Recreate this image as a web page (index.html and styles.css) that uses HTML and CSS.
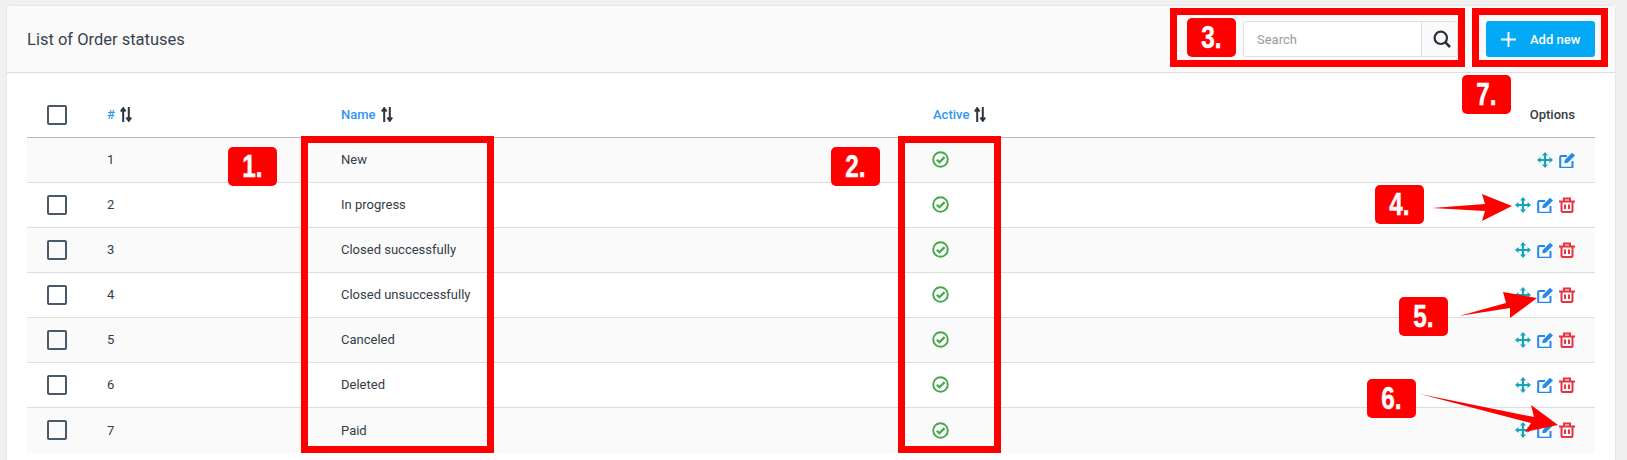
FILE: index.html
```html
<!DOCTYPE html>
<html lang="en">
<head>
<meta charset="utf-8">
<title>List of Order statuses</title>
<link rel="stylesheet" href="styles.css">
</head>
<body>
<svg width="0" height="0" class="defs">
  <defs>
    <symbol id="i-move" viewBox="0 0 16 16"><path d="M8 0 11 3.500H9.100V6.900H12.500V5L16 8 12.500 11V9.100H9.100V12.500H11L8 16 5 12.500H6.900V9.100H3.500V11L0 8 3.500 5V6.900H6.900V3.500H5Z" fill="#12a5bd"/></symbol>
    <symbol id="i-edit" viewBox="0 0 16 16"><path d="M8 4H2.200a1 1 0 0 0-1 1v9.800a1 1 0 0 0 1 1h10.300a1 1 0 0 0 1-1V9" fill="none" stroke="#2489ea" stroke-width="2"/><path d="M5.300 11.200 5.800 8 13 .8 16 3.500 8.700 10.700Z" fill="#2489ea"/></symbol>
    <symbol id="i-trash" viewBox="0 0 16 16"><path d="M0 4.500H16M5 4.500V1.500H11V4.500M2.500 4.500V14a1 1 0 0 0 1 1H12.500a1 1 0 0 0 1-1V4.500M6 7.500v4.500M10 7.500v4.500" fill="none" stroke="#e5333f" stroke-width="2"/></symbol>
    <symbol id="i-check" viewBox="0 0 17 17"><circle cx="8.500" cy="8.500" r="7.300" fill="none" stroke="#43a84b" stroke-width="1.900"/><path d="m4.800 8.700 2.600 2.600 5.200-5.200" fill="none" stroke="#43a84b" stroke-width="2.200"/></symbol>
    <symbol id="i-sort" viewBox="0 0 12 15"><path d="M3.200 15V2M.8 4.500 3.200 1.200 5.600 4.500M8.800 0V13M6.400 10.500 8.800 13.800 11.200 10.500" fill="none" stroke="#2c3540" stroke-width="2"/></symbol>
  </defs>
</svg>

<main class="card">
  <header class="card-head">
    <h1 class="card-title">List of Order statuses</h1>
    <div class="tools">
      <div class="search">
        <input class="search-input" type="text" placeholder="Search">
        <button class="search-btn" type="button" aria-label="Search">
          <svg class="search-icon" viewBox="0 0 18 18"><circle cx="7.800" cy="7.800" r="6.200" fill="none" stroke="#27303a" stroke-width="2.200"/><path d="m12.200 12.200 4.800 4.800" stroke="#27303a" stroke-width="2.600" fill="none"/></svg>
        </button>
      </div>
      <button class="add-btn" type="button">
        <svg class="add-icon" viewBox="0 0 16 16"><path d="M8 0v16M0 8h16" stroke="#fff" stroke-width="2" fill="none"/></svg>
        <span>Add new</span>
      </button>
    </div>
  </header>

  <section class="table-wrap">
    <div class="row row-head">
      <div class="c-check"><span class="box"></span></div>
      <div class="c-id sort">#<svg class="sort-icon"><use href="#i-sort"/></svg></div>
      <div class="c-name sort">Name<svg class="sort-icon"><use href="#i-sort"/></svg></div>
      <div class="c-active sort">Active<svg class="sort-icon"><use href="#i-sort"/></svg></div>
      <div class="c-opts opts-title">Options</div>
    </div>

    <div class="row odd">
      <div class="c-check"></div>
      <div class="c-id">1</div>
      <div class="c-name">New</div>
      <div class="c-active"><svg class="check"><use href="#i-check"/></svg></div>
      <div class="c-opts"><svg class="act"><use href="#i-move"/></svg><svg class="act"><use href="#i-edit"/></svg></div>
    </div>
    <div class="row">
      <div class="c-check"><span class="box"></span></div>
      <div class="c-id">2</div>
      <div class="c-name">In progress</div>
      <div class="c-active"><svg class="check"><use href="#i-check"/></svg></div>
      <div class="c-opts"><svg class="act"><use href="#i-move"/></svg><svg class="act"><use href="#i-edit"/></svg><svg class="act"><use href="#i-trash"/></svg></div>
    </div>
    <div class="row odd">
      <div class="c-check"><span class="box"></span></div>
      <div class="c-id">3</div>
      <div class="c-name">Closed successfully</div>
      <div class="c-active"><svg class="check"><use href="#i-check"/></svg></div>
      <div class="c-opts"><svg class="act"><use href="#i-move"/></svg><svg class="act"><use href="#i-edit"/></svg><svg class="act"><use href="#i-trash"/></svg></div>
    </div>
    <div class="row">
      <div class="c-check"><span class="box"></span></div>
      <div class="c-id">4</div>
      <div class="c-name">Closed unsuccessfully</div>
      <div class="c-active"><svg class="check"><use href="#i-check"/></svg></div>
      <div class="c-opts"><svg class="act"><use href="#i-move"/></svg><svg class="act"><use href="#i-edit"/></svg><svg class="act"><use href="#i-trash"/></svg></div>
    </div>
    <div class="row odd">
      <div class="c-check"><span class="box"></span></div>
      <div class="c-id">5</div>
      <div class="c-name">Canceled</div>
      <div class="c-active"><svg class="check"><use href="#i-check"/></svg></div>
      <div class="c-opts"><svg class="act"><use href="#i-move"/></svg><svg class="act"><use href="#i-edit"/></svg><svg class="act"><use href="#i-trash"/></svg></div>
    </div>
    <div class="row">
      <div class="c-check"><span class="box"></span></div>
      <div class="c-id">6</div>
      <div class="c-name">Deleted</div>
      <div class="c-active"><svg class="check"><use href="#i-check"/></svg></div>
      <div class="c-opts"><svg class="act"><use href="#i-move"/></svg><svg class="act"><use href="#i-edit"/></svg><svg class="act"><use href="#i-trash"/></svg></div>
    </div>
    <div class="row odd last">
      <div class="c-check"><span class="box"></span></div>
      <div class="c-id">7</div>
      <div class="c-name">Paid</div>
      <div class="c-active"><svg class="check"><use href="#i-check"/></svg></div>
      <div class="c-opts"><svg class="act"><use href="#i-move"/></svg><svg class="act"><use href="#i-edit"/></svg><svg class="act"><use href="#i-trash"/></svg></div>
    </div>
  </section>
</main>

<div class="mark mark-search"></div>
<div class="mark mark-add"></div>
<div class="mark mark-name"></div>
<div class="mark mark-active"></div>

<span class="badge b1"><span class="badge-num">1.</span></span>
<span class="badge b2"><span class="badge-num">2.</span></span>
<span class="badge b3"><span class="badge-num">3.</span></span>
<span class="badge b4"><span class="badge-num">4.</span></span>
<span class="badge b5"><span class="badge-num">5.</span></span>
<span class="badge b6"><span class="badge-num">6.</span></span>
<span class="badge b7"><span class="badge-num">7.</span></span>

<svg class="arrows" viewBox="0 0 1627 460">
  <path d="M1432 208 1485 204 1482 194 1512 206 1482 221 1485 211Z" fill="#f00"/>
  <path d="M1459 316 1506 303 1503 292 1537 298 1510 318 1510 308Z" fill="#f00"/>
  <path d="M1420 394 1534 417 1531 405 1558 425 1525 432 1531 423Z" fill="#f00"/>
</svg>
</body>
</html>
```
FILE: styles.css
```css
* { box-sizing: border-box; }
html, body { height: 100%; }
body {
  margin: 0;
  padding: 6px 12px 0 7px;
  background: #f0f0f0;
  font-family: Roboto, "Liberation Sans", sans-serif;
  color: #333d47;
  overflow: hidden;
  position: relative;
}
.defs { position: absolute; }
.card {
  background: #fff;
  border-radius: 3px 3px 0 0;
  min-height: 470px;
  box-shadow: 0 0 2px rgba(0,0,0,.15);
}
.card-head {
  height: 67px;
  background: #fafafa;
  border-bottom: 1px solid #dedede;
  display: flex;
  align-items: center;
  justify-content: space-between;
  padding: 0 20px;
}
.card-title {
  margin: 0;
  font-size: 16.5px;
  font-weight: 400;
  color: #38424c;
}
.tools { display: flex; align-items: center; gap: 28px; }
.search {
  display: flex;
  width: 215px;
  height: 36px;
  background: #fff;
  border: 1px solid #e0e0e0;
  border-radius: 3px;
  overflow: hidden;
}
.search-input {
  width: 177px;
  border: 0;
  background: transparent;
  padding: 0 13px;
  font: 400 13px Roboto, sans-serif;
  outline: 0;
}
.search-input::placeholder { color: #9a9a9a; opacity: 1; }
.search-btn {
  flex: 1;
  border: 0;
  border-left: 1px solid #e0e0e0;
  background: #fafafa;
  padding: 0 0 0 5px;
  display: flex;
  align-items: center;
  justify-content: center;
}
.search-icon { width: 18px; height: 18px; }
.add-btn {
  width: 109px;
  height: 36px;
  background: #03a9f4;
  color: #fff;
  border: 0;
  border-radius: 3px;
  display: flex;
  align-items: center;
  gap: 14px;
  padding: 0 0 0 15px;
  font: 500 13px Roboto, sans-serif;
  white-space: nowrap;
}
.add-icon { width: 15px; height: 15px; flex: none; }
.table-wrap { padding: 20px 20px 0; }
.row {
  display: flex;
  align-items: center;
  height: 45px;
  padding-bottom: 1px;
  font-size: 13px;
  border-bottom: 1px solid #dedede;
}
.row.odd { background: #fafafa; }
.row.last { border-bottom: 0; }
.row-head { border-bottom-color: #b8b8b8; }
.c-check { width: 80px; padding-left: 20px; flex: none; display: flex; }
.c-id { width: 234px; flex: none; }
.c-name { width: 592px; flex: none; }
.c-active { flex: 1; display: flex; align-items: center; }
.c-opts { display: flex; align-items: center; justify-content: flex-end; gap: 6px; padding-right: 20px; }
.sort { color: #2f96f3; font-weight: 500; display: flex; align-items: center; gap: 5px; }
.sort-icon { width: 12px; height: 15px; }
.opts-title { color: #333d47; font-weight: 500; }
.box { width: 20px; height: 20px; border: 2px solid #47596a; border-radius: 2px; display: block; }
.check { width: 17px; height: 17px; margin-left: -1px; }
.act { width: 16px; height: 16px; }

.mark { position: absolute; border: 7px solid #f00; }
.mark-search { left: 1170px; top: 8px; width: 295px; height: 59px; }
.mark-add { left: 1472px; top: 8px; width: 136px; height: 59px; }
.mark-name { left: 301px; top: 136px; width: 193px; height: 317px; }
.mark-active { left: 898px; top: 136px; width: 103px; height: 317px; }

.badge {
  position: absolute;
  width: 49px;
  height: 39px;
  background: #f00;
  border-radius: 5px;
  color: #fff;
  font: 700 32px/39px "Liberation Sans", sans-serif;
  text-align: center;
}
.badge-num {
  display: inline-block;
  transform: scaleX(.76);
  -webkit-text-stroke: .5px #fff;
}
.b1 { left: 228px; top: 147px; }
.b2 { left: 831px; top: 147px; }
.b3 { left: 1187px; top: 18px; }
.b4 { left: 1375px; top: 185px; }
.b5 { left: 1399px; top: 297px; }
.b6 { left: 1367px; top: 379px; }
.b7 { left: 1462px; top: 75px; }

.arrows { position: absolute; left: 0; top: 0; width: 1627px; height: 460px; pointer-events: none; }
```
